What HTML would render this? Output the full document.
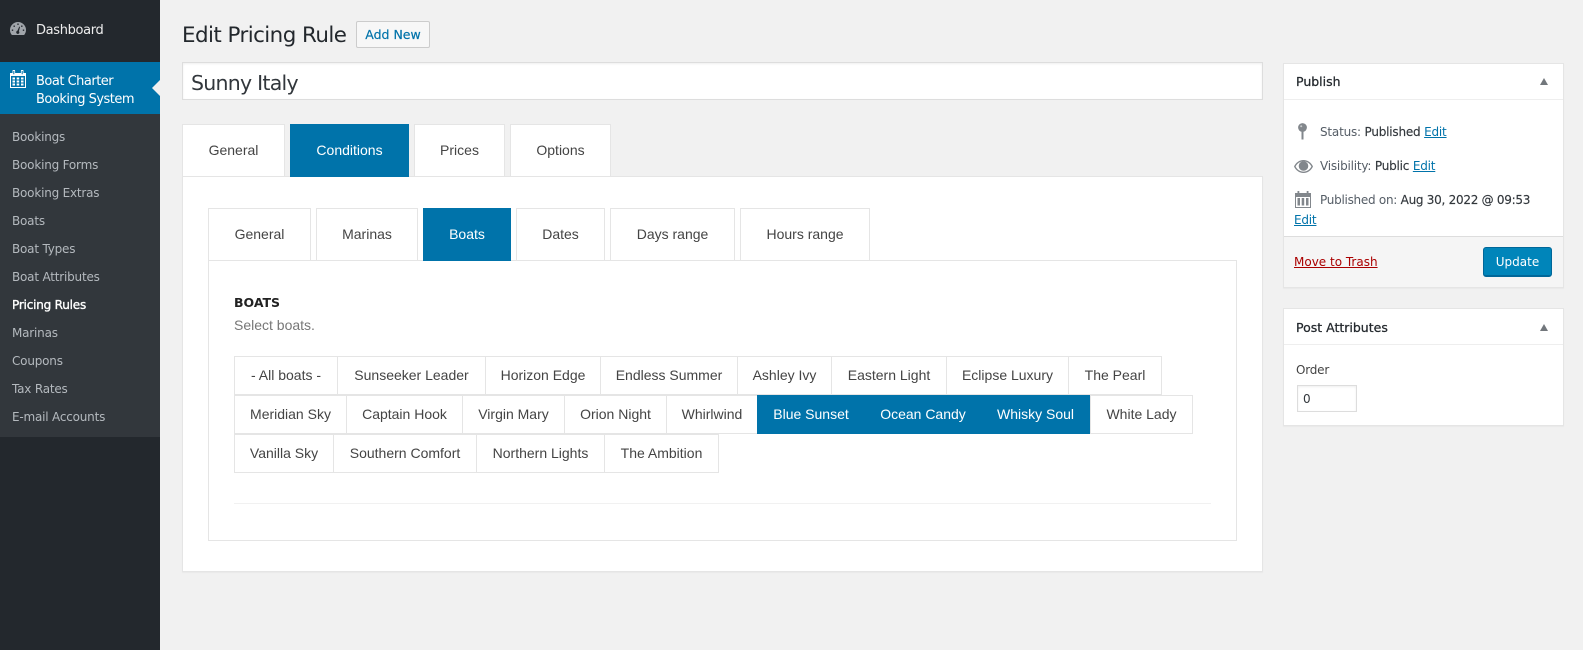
<!DOCTYPE html>
<html><head><meta charset="utf-8"><title>Edit Pricing Rule</title>
<style>
*{box-sizing:border-box}
html,body{margin:0;padding:0;width:1583px;height:650px;overflow:hidden;background:#f1f1f1}
body{position:relative;font-family:"DejaVu Sans",sans-serif;color:#444}
.a{position:absolute}
.t{position:absolute;white-space:nowrap}
.m{position:absolute;background:#fff;border:1px solid #e5e5e5;font:14px/20px "Liberation Sans",Arial,sans-serif;color:#444;text-align:center;display:flex;align-items:center;justify-content:center;padding-bottom:2px}
.on{background:#0073aa;border-color:#0073aa;color:#fff}
.side{font-size:12px;line-height:18px;color:#b4b9be;left:12px;letter-spacing:-.2px}
a{color:#0073aa;text-decoration:underline}
.s{font-size:12px;line-height:18px;color:#555d66;letter-spacing:-.2px}
.s b{font-weight:400;color:#32373c;-webkit-text-stroke:.15px #32373c}
</style></head><body>

<div class="a" style="left:0;top:0;width:160px;height:650px;background:#23282d"></div>
<div class="a" style="left:0;top:62px;width:160px;height:52px;background:#0073aa"></div>
<div class="a" style="left:0;top:114px;width:160px;height:323px;background:#32373c"></div>
<div class="a" style="left:152px;top:80px;border:8px solid transparent;border-right-color:#f1f1f1;border-left:0;"></div>

<svg class="a" style="left:10px;top:21px" width="16" height="15" viewBox="0 0 16 15"><path fill="#a0a5aa" d="M8 1a8 8 0 0 0-8 8c0 2 .7 3.800 1.900 5h12.200A8 8 0 0 0 16 9a8 8 0 0 0-8-8z"/><g fill="#23282d"><rect x="7.300" y="2.500" width="1.400" height="1.400"/><rect x="3.500" y="4.500" width="1.400" height="1.400"/><rect x="11.100" y="4.500" width="1.400" height="1.400"/><rect x="1.800" y="8.500" width="1.400" height="1.400"/><rect x="12.800" y="8.500" width="1.400" height="1.400"/><path d="M9.300 5.500 10 6 8.900 10.200a1.600 1.600 0 1 1-1.500-.4z"/></g></svg>
<div class="t" style="left:36px;top:22px;font-size:13px;line-height:18px;color:#eee;letter-spacing:-.35px">Dashboard</div>

<svg class="a" style="left:10px;top:70px" width="16" height="18" viewBox="0 0 16 18"><path fill="#fff" d="M0 3h2.500V1a1.300 1.300 0 0 1 2.600 0v2h5.800V1a1.300 1.300 0 0 1 2.600 0v2H16v15H0z"/><path fill="#0073aa" d="M3.300 1h1v3.200h-1zM11.700 1h1v3.200h-1zM1 6h14v11H1z"/><g fill="#fff"><rect x="2.500" y="7.500" width="2.500" height="2"/><rect x="6.700" y="7.500" width="2.500" height="2"/><rect x="11" y="7.500" width="2.500" height="2"/><rect x="2.500" y="10.500" width="2.500" height="2"/><rect x="6.700" y="10.500" width="2.500" height="2"/><rect x="11" y="10.500" width="2.500" height="2"/><rect x="2.500" y="13.500" width="2.500" height="2"/><rect x="6.700" y="13.500" width="2.500" height="2"/><rect x="11" y="13.500" width="2.500" height="2"/></g></svg>
<div class="t" style="left:36px;top:72.500px;font-size:13px;line-height:18px;color:#fff;letter-spacing:-.5px">Boat Charter<br>Booking System</div>

<div class="t side" style="top:128px">Bookings</div>
<div class="t side" style="top:156px">Booking Forms</div>
<div class="t side" style="top:184px">Booking Extras</div>
<div class="t side" style="top:212px">Boats</div>
<div class="t side" style="top:240px">Boat Types</div>
<div class="t side" style="top:268px">Boat Attributes</div>
<div class="t side" style="top:296px;color:#fff;-webkit-text-stroke:.35px #fff">Pricing Rules</div>
<div class="t side" style="top:324px">Marinas</div>
<div class="t side" style="top:352px">Coupons</div>
<div class="t side" style="top:380px">Tax Rates</div>
<div class="t side" style="top:408px">E-mail Accounts</div>

<div class="t" style="left:182px;top:21px;font-size:21.400px;line-height:30px;color:#23282d;letter-spacing:-.55px">Edit Pricing Rule</div>
<div class="a" style="left:356px;top:21px;width:74px;height:27px;background:#f7f7f7;border:1px solid #ccc;border-radius:2px;color:#0073aa;font-size:12.500px;line-height:26px;text-align:center;-webkit-text-stroke:.2px #0073aa">Add New</div>

<div class="a" style="left:182px;top:62px;width:1081px;height:38px;background:#fff;border:1px solid #ddd;box-shadow:inset 0 1px 2px rgba(0,0,0,.07)"></div>
<div class="t" style="left:191px;top:69px;font-size:20.500px;line-height:28px;color:#32373c;letter-spacing:-.75px">Sunny Italy</div>

<div class="a" style="left:182px;top:176px;width:1081px;height:396px;background:#fff;border:1px solid #e5e5e5;box-shadow:0 1px 1px rgba(0,0,0,.04)"></div>
<div class="m" style="left:182px;top:124px;width:103px;height:53px">General</div>
<div class="m on" style="left:290px;top:124px;width:119px;height:53px">Conditions</div>
<div class="m" style="left:414px;top:124px;width:91px;height:53px">Prices</div>
<div class="m" style="left:510px;top:124px;width:101px;height:53px">Options</div>

<div class="a" style="left:208px;top:260px;width:1029px;height:281px;background:#fff;border:1px solid #e5e5e5"></div>
<div class="m" style="left:208px;top:208px;width:103px;height:53px">General</div>
<div class="m" style="left:316px;top:208px;width:102px;height:53px">Marinas</div>
<div class="m on" style="left:423px;top:208px;width:88px;height:53px">Boats</div>
<div class="m" style="left:516px;top:208px;width:89px;height:53px">Dates</div>
<div class="m" style="left:610px;top:208px;width:125px;height:53px">Days range</div>
<div class="m" style="left:740px;top:208px;width:130px;height:53px">Hours range</div>

<div class="t" style="left:234px;top:294px;font-size:12.500px;line-height:18px;font-weight:700;color:#222">BOATS</div>
<div class="t" style="left:234px;top:315px;font:14px/20px 'Liberation Sans',Arial,sans-serif;color:#777">Select boats.</div>

<div class="m" style="left:234px;top:356px;width:104px;height:39px">- All boats -</div>
<div class="m" style="left:337px;top:356px;width:149px;height:39px">Sunseeker Leader</div>
<div class="m" style="left:485px;top:356px;width:116px;height:39px">Horizon Edge</div>
<div class="m" style="left:600px;top:356px;width:138px;height:39px">Endless Summer</div>
<div class="m" style="left:737px;top:356px;width:95px;height:39px">Ashley Ivy</div>
<div class="m" style="left:831px;top:356px;width:116px;height:39px">Eastern Light</div>
<div class="m" style="left:946px;top:356px;width:123px;height:39px">Eclipse Luxury</div>
<div class="m" style="left:1068px;top:356px;width:94px;height:39px">The Pearl</div>

<div class="m" style="left:234px;top:395px;width:113px;height:39px">Meridian Sky</div>
<div class="m" style="left:346px;top:395px;width:117px;height:39px">Captain Hook</div>
<div class="m" style="left:462px;top:395px;width:103px;height:39px">Virgin Mary</div>
<div class="m" style="left:564px;top:395px;width:103px;height:39px">Orion Night</div>
<div class="m" style="left:666px;top:395px;width:92px;height:39px">Whirlwind</div>
<div class="m on" style="left:757px;top:395px;width:108px;height:39px">Blue Sunset</div>
<div class="m on" style="left:864px;top:395px;width:118px;height:39px">Ocean Candy</div>
<div class="m on" style="left:981px;top:395px;width:109px;height:39px">Whisky Soul</div>
<div class="m" style="left:1090px;top:395px;width:103px;height:39px">White Lady</div>

<div class="m" style="left:234px;top:434px;width:100px;height:39px">Vanilla Sky</div>
<div class="m" style="left:333px;top:434px;width:144px;height:39px">Southern Comfort</div>
<div class="m" style="left:476px;top:434px;width:129px;height:39px">Northern Lights</div>
<div class="m" style="left:604px;top:434px;width:115px;height:39px">The Ambition</div>

<div class="a" style="left:234px;top:503px;width:977px;height:1px;background:#f1f1f1"></div>

<div class="a" style="left:1283px;top:63px;width:281px;height:225px;background:#fff;border:1px solid #e5e5e5;box-shadow:0 1px 1px rgba(0,0,0,.04)"></div>
<div class="a" style="left:1284px;top:99px;width:279px;height:1px;background:#eee"></div>
<div class="t" style="left:1296px;top:72.500px;font-size:12.500px;line-height:18px;color:#23282d;-webkit-text-stroke:.25px #23282d">Publish</div>
<div class="a" style="left:1540px;top:78px;border-left:4.500px solid transparent;border-right:4.500px solid transparent;border-bottom:7px solid #72777c"></div>

<svg class="a" style="left:1298px;top:123px" width="9" height="17" viewBox="0 0 9 17"><circle cx="4.500" cy="4.500" r="4.400" fill="#82878c"/><rect x="3.500" y="7" width="2" height="9.500" fill="#82878c"/><circle cx="3.200" cy="3.200" r="1" fill="#c8cbcd"/></svg>
<div class="t s" style="left:1320px;top:123px">Status: <b>Published</b> <a>Edit</a></div>

<svg class="a" style="left:1294px;top:160px" width="19" height="13" viewBox="0 0 19 13"><path fill="#82878c" d="M9.500 0C5.200 0 1.800 2.700 0 6.500 1.800 10.300 5.200 13 9.500 13s7.700-2.700 9.500-6.500C17.200 2.700 13.800 0 9.500 0z"/><path fill="#fff" d="M9.500 1.400C6 1.400 3.200 3.400 1.600 6.500c1.600 3.100 4.400 5.100 7.900 5.100s6.300-2 7.900-5.100c-1.600-3.100-4.400-5.100-7.900-5.100z"/><circle cx="9.500" cy="6" r="4.800" fill="#82878c"/></svg>
<div class="t s" style="left:1320px;top:157px">Visibility: <b>Public</b> <a>Edit</a></div>

<svg class="a" style="left:1295px;top:190px" width="16" height="18" viewBox="0 0 16 18"><path fill="#82878c" d="M0 3h2.500V1h1.800v2h7.400V1h1.800v2H16v15H0z"/><rect x="1" y="7" width="14" height="10" fill="#fff"/><rect x="2.500" y="8" width="2.500" height="7.500" fill="#82878c"/><rect x="6.700" y="8" width="2.500" height="7.500" fill="#82878c"/><rect x="11" y="8" width="2.500" height="7.500" fill="#82878c"/></svg>
<div class="t s" style="left:1320px;top:191px;letter-spacing:-.27px">Published on: <b>Aug 30, 2022 @ 09:53</b></div>
<div class="t s" style="left:1294px;top:211px"><a>Edit</a></div>

<div class="a" style="left:1284px;top:236px;width:279px;height:51px;background:#f5f5f5;border-top:1px solid #ddd"></div>
<div class="t s" style="left:1294px;top:253px;letter-spacing:0"><a style="color:#a00">Move to Trash</a></div>
<div class="a" style="left:1483px;top:247px;width:69px;height:30px;background:#0085ba;border:1px solid #006799;border-bottom-width:2px;border-radius:3px;color:#fff;font-size:12px;line-height:29px;text-align:center">Update</div>

<div class="a" style="left:1283px;top:308px;width:281px;height:118px;background:#fff;border:1px solid #e5e5e5;box-shadow:0 1px 1px rgba(0,0,0,.04)"></div>
<div class="a" style="left:1284px;top:344px;width:279px;height:1px;background:#eee"></div>
<div class="t" style="left:1296px;top:318.500px;font-size:12.500px;line-height:18px;color:#23282d;-webkit-text-stroke:.25px #23282d">Post Attributes</div>
<div class="a" style="left:1540px;top:324px;border-left:4.500px solid transparent;border-right:4.500px solid transparent;border-bottom:7px solid #72777c"></div>
<div class="t s" style="left:1296px;top:361px;color:#444">Order</div>
<div class="a" style="left:1297px;top:385px;width:60px;height:27px;background:#fff;border:1px solid #ddd;box-shadow:inset 0 1px 2px rgba(0,0,0,.07)"></div>
<div class="t s" style="left:1303px;top:390px;color:#32373c">0</div>

</body></html>
